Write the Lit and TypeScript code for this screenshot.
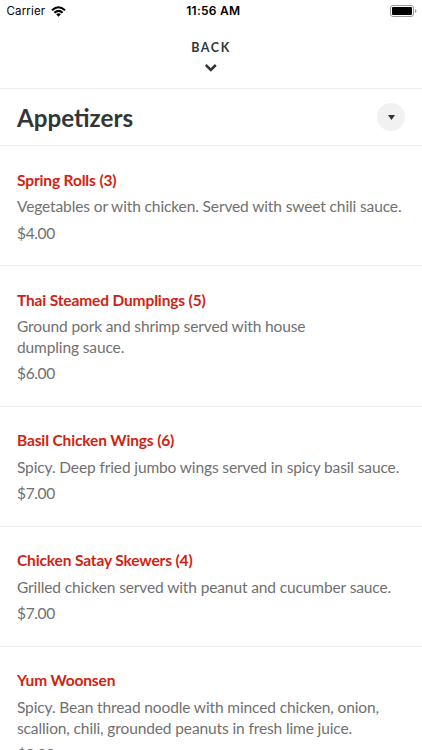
import { LitElement, html, css } from "lit";
import { customElement } from "lit/decorators.js";

const ITEMS = [
  { name: "Spring Rolls (3)", lines: ["Vegetables or with chicken. Served with sweet chili sauce."], price: "$4.00" },
  { name: "Thai Steamed Dumplings (5)", lines: ["Ground pork and shrimp served with house", "dumpling sauce."], price: "$6.00" },
  { name: "Basil Chicken Wings (6)", lines: ["Spicy. Deep fried jumbo wings served in spicy basil sauce."], price: "$7.00" },
  { name: "Chicken Satay Skewers (4)", lines: ["Grilled chicken served with peanut and cucumber sauce."], price: "$7.00" },
  { name: "Yum Woonsen", lines: ["Spicy. Bean thread noodle with minced chicken, onion,", "scallion, chili, grounded peanuts in fresh lime juice."], price: "$9.00" },
];

@customElement("app-root")
export class AppRoot extends LitElement {
  static styles = css`
    :host { display: block; height: 750px; overflow: hidden; background: #fff; font-family: Lato, sans-serif; color: #333637; }
    * { box-sizing: border-box; }
    .status { display: grid; grid-template-columns: 1fr auto 1fr; align-items: center; height: 22px; padding: 0 5px 0 6.5px; font: 11.5px/22px Inter, sans-serif; color: #000; }
    .carrier { display: flex; align-items: center; gap: 6px; letter-spacing: 0.15px; }
    .time { font-size: 12px; font-weight: 600; letter-spacing: 0.25px; padding-left: 3px; }
    .battery { justify-self: end; display: block; margin-top: -1px; }
    .back { height: 66px; padding-top: 17.5px; display: flex; flex-direction: column; align-items: center; font-size: 12.5px; line-height: 16px; font-weight: 700; letter-spacing: 1.55px; }
    .back svg { margin: 8px 1px 0 0; }
    .head { height: 58px; border: solid #ededed; border-width: 1px 0; display: flex; align-items: center; justify-content: space-between; padding: 0 17px; }
    h1 { margin: 2px 0 0; font-size: 24.2px; line-height: 30px; font-weight: 700; }
    .toggle { width: 28px; height: 28px; border-radius: 50%; background: #f1f1f1; display: grid; place-items: center; }
    .item { border-bottom: 1px solid #ededed; padding: 23.6px 17px 22px; font-size: 15.5px; line-height: 20.5px; color: #707070; white-space: nowrap; letter-spacing: -0.12px; }
    h2 { margin: 0 0 6.3px; font-size: 15.5px; line-height: 20.5px; font-weight: 700; color: #cf2412; letter-spacing: -0.14px; }
    .price { margin-top: 5.7px; letter-spacing: -0.35px; }
  `;

  render() {
    return html`
      <div class="status">
        <div class="carrier"><span>Carrier</span>
          <svg width="15" height="11" viewBox="0 0 15 11" fill="none" stroke="#000" stroke-width="2"><path d="M1 4.2Q7.5-1.8 14 4.2M3.4 6.7Q7.5 3 11.6 6.7"/><path d="M5.2 8.3Q7.5 6.4 9.8 8.3L7.5 10.8z" fill="#000" stroke="none"/></svg>
        </div>
        <div class="time">11:56 AM</div>
        <svg class="battery" width="27" height="12" viewBox="0 0 27 12"><rect x=".5" y=".5" width="23" height="11" rx="2.5" fill="none" stroke="#999"/><rect x="2" y="2" width="20" height="8" rx="1"/><path d="M25 4q1.5.6 1.5 2T25 8z" fill="#999"/></svg>
      </div>
      <div class="back"><span>BACK</span><svg width="12" height="8" viewBox="0 0 12 8" fill="none" stroke="#333637" stroke-width="2.6"><path d="M.8 1l5 5 5-5"/></svg></div>
      <div class="head"><h1>Appetizers</h1><div class="toggle"><svg width="7" height="5" viewBox="0 0 7 5"><path d="M0 0h7L3.5 5z" fill="#333"/></svg></div></div>
      ${ITEMS.map((i) => html`<section class="item"><h2>${i.name}</h2>${i.lines.map((l) => html`<div>${l}</div>`)}<div class="price">${i.price}</div></section>`)}
    `;
  }
}
